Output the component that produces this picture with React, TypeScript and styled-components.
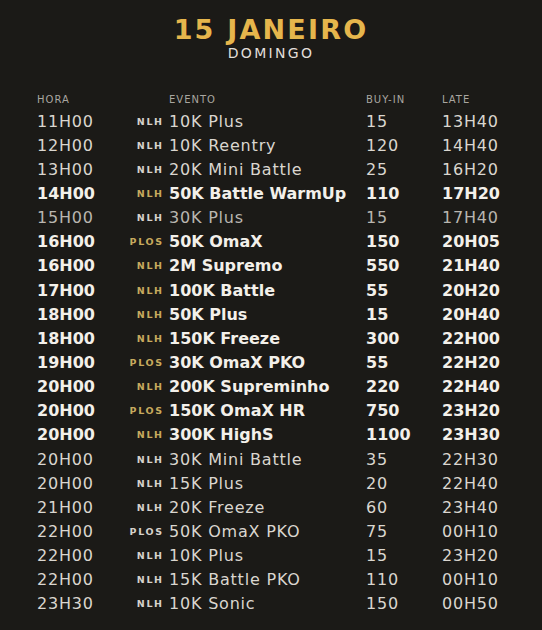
import React from 'react';
import styled, { createGlobalStyle } from 'styled-components';

type Kind = 'normal' | 'bold' | 'dim';

interface Evento {
  hora: string;
  tag: 'NLH' | 'PLOS';
  nome: string;
  buyIn: string;
  late: string;
  kind: Kind;
}

const eventos: Evento[] = [
  { hora: '11H00', tag: 'NLH', nome: '10K Plus', buyIn: '15', late: '13H40', kind: 'normal' },
  { hora: '12H00', tag: 'NLH', nome: '10K Reentry', buyIn: '120', late: '14H40', kind: 'normal' },
  { hora: '13H00', tag: 'NLH', nome: '20K Mini Battle', buyIn: '25', late: '16H20', kind: 'normal' },
  { hora: '14H00', tag: 'NLH', nome: '50K Battle WarmUp', buyIn: '110', late: '17H20', kind: 'bold' },
  { hora: '15H00', tag: 'NLH', nome: '30K Plus', buyIn: '15', late: '17H40', kind: 'dim' },
  { hora: '16H00', tag: 'PLOS', nome: '50K OmaX', buyIn: '150', late: '20H05', kind: 'bold' },
  { hora: '16H00', tag: 'NLH', nome: '2M Supremo', buyIn: '550', late: '21H40', kind: 'bold' },
  { hora: '17H00', tag: 'NLH', nome: '100K Battle', buyIn: '55', late: '20H20', kind: 'bold' },
  { hora: '18H00', tag: 'NLH', nome: '50K Plus', buyIn: '15', late: '20H40', kind: 'bold' },
  { hora: '18H00', tag: 'NLH', nome: '150K Freeze', buyIn: '300', late: '22H00', kind: 'bold' },
  { hora: '19H00', tag: 'PLOS', nome: '30K OmaX PKO', buyIn: '55', late: '22H20', kind: 'bold' },
  { hora: '20H00', tag: 'NLH', nome: '200K Supreminho', buyIn: '220', late: '22H40', kind: 'bold' },
  { hora: '20H00', tag: 'PLOS', nome: '150K OmaX HR', buyIn: '750', late: '23H20', kind: 'bold' },
  { hora: '20H00', tag: 'NLH', nome: '300K HighS', buyIn: '1100', late: '23H30', kind: 'bold' },
  { hora: '20H00', tag: 'NLH', nome: '30K Mini Battle', buyIn: '35', late: '22H30', kind: 'normal' },
  { hora: '20H00', tag: 'NLH', nome: '15K Plus', buyIn: '20', late: '22H40', kind: 'normal' },
  { hora: '21H00', tag: 'NLH', nome: '20K Freeze', buyIn: '60', late: '23H40', kind: 'normal' },
  { hora: '22H00', tag: 'PLOS', nome: '50K OmaX PKO', buyIn: '75', late: '00H10', kind: 'normal' },
  { hora: '22H00', tag: 'NLH', nome: '10K Plus', buyIn: '15', late: '23H20', kind: 'normal' },
  { hora: '22H00', tag: 'NLH', nome: '15K Battle PKO', buyIn: '110', late: '00H10', kind: 'normal' },
  { hora: '23H30', tag: 'NLH', nome: '10K Sonic', buyIn: '150', late: '00H50', kind: 'normal' },
];

const GlobalStyle = createGlobalStyle`
  html, body {
    margin: 0;
    background: #1b1a17;
  }
  body {
    font-family: "DejaVu Sans", "Liberation Sans", sans-serif;
  }
`;

const Page = styled.div`
  width: 542px;
  height: 630px;
  background: #1b1a17;
  overflow: hidden;
  display: flex;
  flex-direction: column;
`;

const Header = styled.header`
  display: flex;
  flex-direction: column;
  align-items: center;
  padding-top: 15px;
`;

const Title = styled.h1`
  margin: 0;
  font-size: 27px;
  line-height: 30px;
  font-weight: 700;
  letter-spacing: 2.2px;
  color: #e6b64c;
`;

const Subtitle = styled.div`
  font-size: 14px;
  line-height: 16px;
  letter-spacing: 2.3px;
  color: #e2dfda;
`;

const Table = styled.div`
  display: flex;
  flex-direction: column;
  padding: 28px 0 0 37px;
`;

const cols = '93px 32px 7px 197px 76px 1fr';

const HeadRow = styled.div`
  display: grid;
  grid-template-columns: ${cols};
  height: 20px;
  align-items: center;
  font-size: 10px;
  letter-spacing: 1px;
  color: #a9a6a0;
`;

const colors: Record<Kind, string> = {
  normal: '#dad6cf',
  bold: '#f3f0ea',
  dim: '#b9b6b0',
};

const Row = styled.div<{ $kind: Kind }>`
  display: grid;
  grid-template-columns: ${cols};
  height: 24.15px;
  align-items: center;
  font-size: 16px;
  font-weight: ${(p) => (p.$kind === 'bold' ? 700 : 400)};
  letter-spacing: ${(p) => (p.$kind === 'bold' ? '0' : '0.8px')};
  color: ${(p) => colors[p.$kind]};
  white-space: nowrap;
`;

const Tag = styled.span<{ $gold: boolean }>`
  justify-self: end;
  font-size: 9.5px;
  font-weight: 700;
  letter-spacing: 1.6px;
  margin-right: -1.6px;
  color: ${(p) => (p.$gold ? '#c7aa5e' : '#d6d2cb')};
`;

const Cell = styled.span<{ $col: number }>`
  grid-column: ${(p) => p.$col};
`;

const App = () => (
  <Page>
    <GlobalStyle />
    <Header>
      <Title>15 JANEIRO</Title>
      <Subtitle>DOMINGO</Subtitle>
    </Header>
    <Table>
      <HeadRow>
        <Cell $col={1}>HORA</Cell>
        <Cell $col={4}>EVENTO</Cell>
        <Cell $col={5}>BUY-IN</Cell>
        <Cell $col={6}>LATE</Cell>
      </HeadRow>
      {eventos.map((ev, i) => (
        <Row key={i} $kind={ev.kind}>
          <Cell $col={1}>{ev.hora}</Cell>
          <Tag $gold={ev.kind === 'bold'}>{ev.tag}</Tag>
          <Cell $col={4}>{ev.nome}</Cell>
          <Cell $col={5}>{ev.buyIn}</Cell>
          <Cell $col={6}>{ev.late}</Cell>
        </Row>
      ))}
    </Table>
  </Page>
);

export default App;
